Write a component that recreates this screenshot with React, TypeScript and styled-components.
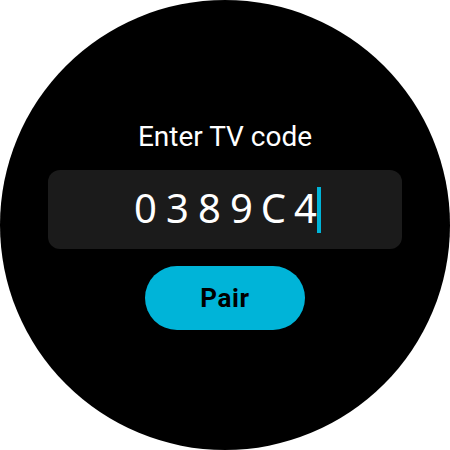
import styled, { createGlobalStyle } from 'styled-components';

const GlobalStyle = createGlobalStyle`
  html, body {
    margin: 0;
    padding: 0;
    background: #ffffff;
  }
  body {
    font-family: Roboto, "Noto Sans", sans-serif;
  }
`;

const code = '0389C4';

const App = () => {
  return (
    <>
      <GlobalStyle />
      <Watch>
        <Title>Enter TV code</Title>
        <CodeField>
          <CodeText>
            {code.split('').map((ch, i) => (
              <Char key={i}>{ch}</Char>
            ))}
          </CodeText>
          <Cursor />
        </CodeField>
        <PairButton>Pair</PairButton>
      </Watch>
    </>
  );
};

export default App;

const Watch = styled.div`
  width: 450px;
  height: 450px;
  border-radius: 50%;
  background: #000000;
  display: flex;
  flex-direction: column;
  align-items: center;
  padding-top: 121px;
  box-sizing: border-box;
`;

const Title = styled.h1`
  margin: 0;
  color: #ffffff;
  font-family: Roboto, sans-serif;
  font-size: 28px;
  font-weight: 400;
  line-height: 32px;
`;

const CodeField = styled.div`
  margin-top: 17px;
  width: 354px;
  height: 79px;
  border-radius: 12px;
  background: #1b1b1b;
  display: flex;
  align-items: center;
  justify-content: center;
  box-sizing: border-box;
`;

const CodeText = styled.div`
  display: flex;
  margin-bottom: 3px;
  color: #ffffff;
  font-family: "Noto Sans", sans-serif;
  font-size: 40px;
  line-height: 46px;
`;

const Char = styled.span`
  width: 32px;
  text-align: center;
`;

const Cursor = styled.span`
  width: 4px;
  height: 46px;
  margin-left: -5px;
  background: #00b4d8;
`;

const PairButton = styled.button`
  margin-top: 17px;
  width: 160px;
  height: 64px;
  padding: 0;
  border: none;
  border-radius: 32px;
  background: #00b4d8;
  color: #000000;
  font-family: Roboto, sans-serif;
  font-size: 26px;
  font-weight: 700;
  letter-spacing: 0.6px;
  cursor: pointer;
`;
